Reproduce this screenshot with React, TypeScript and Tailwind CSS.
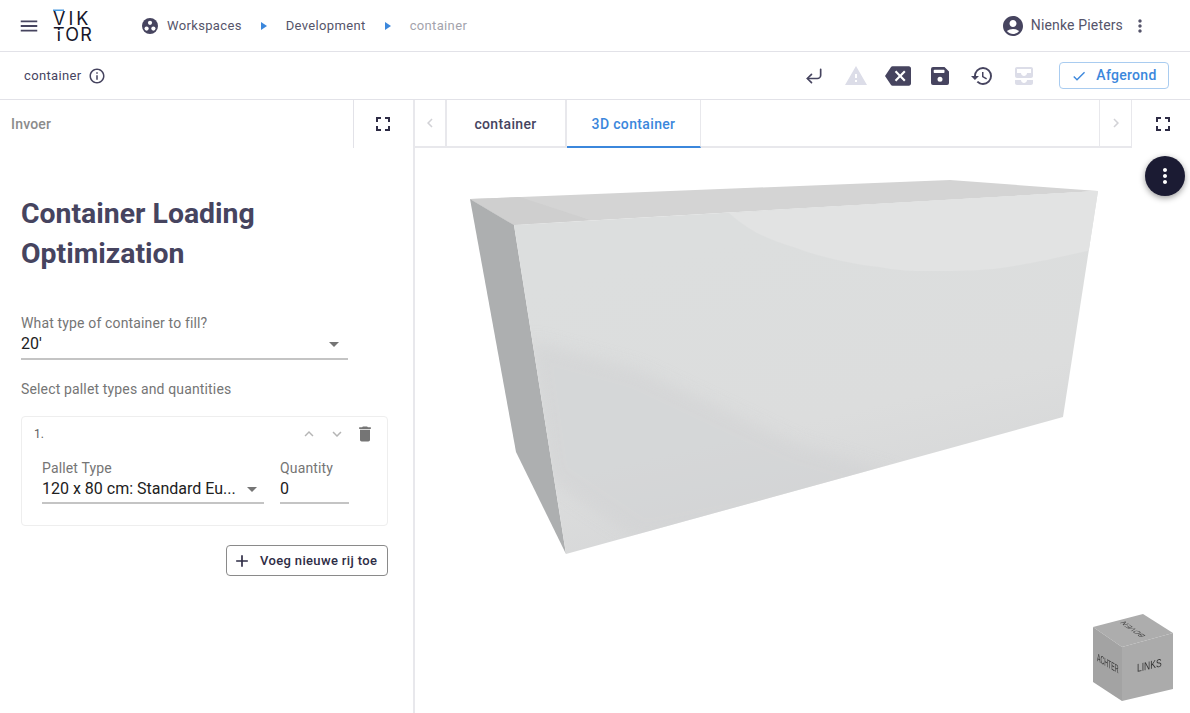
import { CornerDownLeft } from "lucide-react";
import {
  MdAdd,
  MdAccountCircle,
  MdAllInbox,
  MdArrowDropDown,
  MdBackspace,
  MdCheck,
  MdChevronLeft,
  MdChevronRight,
  MdDelete,
  MdFullscreen,
  MdHistory,
  MdInfoOutline,
  MdKeyboardArrowDown,
  MdKeyboardArrowUp,
  MdMenu,
  MdMoreVert,
  MdWarning,
} from "react-icons/md";

const Crumb = () => <span className="mx-[19px] h-0 w-0 border-y-[4px] border-l-[6px] border-y-transparent border-l-[#3b87dc]" />;

const Logo = () => (
  <svg width="44" height="40" viewBox="0 -3 44 40" className="ml-[13px] font-['Inter',sans-serif]" fill="#16162a">
    <rect x="0" y="0.500" width="11" height="1.500" fill="#4a9ae0" />
    <text x="0" y="16" fontSize="18" letterSpacing="3">VIK</text>
    <text x="0" y="32" fontSize="18" letterSpacing="1.200">TOR</text>
    <rect x="0" y="21" width="12" height="1.200" fill="#fff" />
  </svg>
);

const WorkspacesIcon = () => (
  <svg width="16" height="16" viewBox="0 0 16 16" className="ml-[45px] mr-[9px]">
    <circle cx="8" cy="8" r="8" fill="#46445f" />
    <circle cx="8" cy="4.800" r="2.100" fill="#fff" />
    <circle cx="4.600" cy="10.600" r="2.100" fill="#fff" />
    <circle cx="11.400" cy="10.600" r="2.100" fill="#fff" />
  </svg>
);

const SaveIcon = () => (
  <svg width="18" height="18" viewBox="0 0 18 18" fill="#46445f">
    <path
      fillRule="evenodd"
      d="M2 0h11.5L18 4.5V16a2 2 0 0 1-2 2H2a2 2 0 0 1-2-2V2a2 2 0 0 1 2-2zM3.5 2.7a.8.8 0 0 0-.8.8v1.7a.8.8 0 0 0 .8.8h9.2a.8.8 0 0 0 .8-.8V3.500a.8.8 0 0 0-.8-.8zM9 9.800a2.500 2.500 0 1 0 0 5 2.500 2.500 0 0 0 0-5z"
    />
  </svg>
);

const ToolIcon = ({ children }: { children: React.ReactNode }) => (
  <div className="flex w-[42px] items-center justify-center">{children}</div>
);

const Header = () => (
  <header className="flex h-[52px] shrink-0 items-center border-b border-[#e2e2e8] pl-[18px] pr-[40px] font-['Roboto',sans-serif] text-[13px] tracking-[0.35px] text-[#55546a]">
    <MdMenu size={22} className="text-[#46445f]" />
    <Logo />
    <WorkspacesIcon />
    <span>Workspaces</span>
    <Crumb />
    <span>Development</span>
    <Crumb />
    <span className="text-[#a3a3ac]">container</span>
    <MdAccountCircle size={24} className="ml-auto mr-[6px] text-[#46445f]" />
    <span className="text-[14px] tracking-[0.15px]">Nienke Pieters</span>
    <MdMoreVert size={20} className="ml-[7px] text-[#55546a]" />
  </header>
);

const Toolbar = () => (
  <div className="flex h-[48px] shrink-0 items-center border-b border-[#e2e2e8] pl-[24px] pr-[21px] font-['Roboto',sans-serif] text-[14px] text-[#46445f]">
    <span className="text-[13px] tracking-[0.35px]">container</span>
    <MdInfoOutline size={18} className="ml-[6px]" />
    <div className="ml-auto flex items-center">
      <ToolIcon>
        <CornerDownLeft size={20} strokeWidth={2} />
      </ToolIcon>
      <ToolIcon>
        <MdWarning size={24} className="text-[#dcdde8]" />
      </ToolIcon>
      <ToolIcon>
        <MdBackspace size={26} />
      </ToolIcon>
      <ToolIcon>
        <SaveIcon />
      </ToolIcon>
      <ToolIcon>
        <MdHistory size={24} />
      </ToolIcon>
      <ToolIcon>
        <MdAllInbox size={24} className="text-[#dcdde8]" />
      </ToolIcon>
    </div>
    <button className="ml-[14px] flex h-[27px] w-[110px] items-center justify-center gap-[9px] rounded-[4px] border border-[#a9ccf0] font-medium tracking-[0.3px] text-[#3b87dc]">
      <MdCheck size={16} />
      Afgerond
    </button>
  </div>
);

const Underline = ({ className, children }: { className: string; children: React.ReactNode }) => (
  <div className={`flex items-center border-b-2 border-[#c4c4c4] text-[16px] text-[#212121] ${className}`}>{children}</div>
);

const LeftPanel = () => (
  <aside className="flex w-[415px] shrink-0 flex-col border-r-2 border-[#e8e8ec] font-['Roboto',sans-serif]">
    <div className="flex h-[48px] shrink-0 items-center">
      <div className="flex h-full w-[354px] items-center border-r border-[#e2e2e8] pl-[11px] text-[14px] font-medium tracking-[0.2px] text-[#8b8b8b]">
        Invoer
      </div>
      <div className="flex flex-1 items-center justify-center pr-[2px]">
        <MdFullscreen size={24} className="text-[#2e2c45]" />
      </div>
    </div>
    <div className="px-[21px] pt-[46px]">
      <h1 className="text-[28.4px] font-bold leading-[40px] text-[#46445f]">
        Container Loading
        <br />
        Optimization
      </h1>
      <div className="mt-[39px] w-[327px]">
        <div className="text-[14px] leading-[20px] tracking-[0.15px] text-[#757575]">What type of container to fill?</div>
        <Underline className="h-[27px] justify-between pb-[3px] pr-[2px]">
          <span>20'</span>
          <MdArrowDropDown size={24} className="text-[#757575]" />
        </Underline>
      </div>
      <div className="mt-[19px] text-[14px] leading-[20px] tracking-[0.15px] text-[#757575]">Select pallet types and quantities</div>
      <div className="mt-[17px] h-[110px] w-[367px] rounded-[4px] border border-[#eeeeee] pl-[12px] pr-[12px]">
        <div className="flex h-[34px] items-center text-[12px] text-[#616161]">
          <span>1.</span>
          <MdKeyboardArrowUp size={18} className="ml-auto text-[#b5b5b5]" />
          <MdKeyboardArrowDown size={18} className="ml-[10px] text-[#b5b5b5]" />
          <MdDelete size={20} className="ml-[9px] text-[#757575]" />
        </div>
        <div className="ml-[8px] mt-[7px] flex gap-[16px]">
          <div className="w-[222px]">
            <div className="text-[14px] leading-[20px] tracking-[0.15px] text-[#757575]">Pallet Type</div>
            <Underline className="h-[26px] pb-[2px]">
              <span className="flex-1 truncate">120 x 80 cm: Standard Eu...</span>
              <MdArrowDropDown size={24} className="text-[#757575]" />
            </Underline>
          </div>
          <div className="w-[69px]">
            <div className="text-[14px] leading-[20px] tracking-[0.15px] text-[#757575]">Quantity</div>
            <Underline className="h-[26px] pb-[2px]">0</Underline>
          </div>
        </div>
      </div>
      <div className="mt-[19px] flex w-[367px] justify-end">
        <button className="flex h-[31px] w-[162px] items-center whitespace-nowrap rounded-[4px] border border-[#8a8a8a] pl-[5px] text-[13px] font-medium tracking-[0.35px] text-[#2e2c45]">
          <MdAdd size={20} className="mr-[8px] shrink-0" />
          Voeg nieuwe rij toe
        </button>
      </div>
    </div>
  </aside>
);

const Tabs = () => (
  <div className="flex h-[48px] shrink-0 font-['Roboto',sans-serif] text-[14px] font-medium tracking-[0.35px]">
    <div className="flex min-w-0 flex-1 border-b-2 border-[#e8e8ec]">
      <div className="flex w-[32px] items-center justify-center border-r-2 border-[#e8e8ec]">
        <MdChevronLeft size={18} className="text-[#d2d2d6]" />
      </div>
      <div className="flex w-[120px] items-center justify-center border-r-2 border-[#e8e8ec] pr-[1px] pt-[2px] text-[#46445f]">container</div>
      <div className="-mb-[2px] flex w-[134px] items-center justify-center border-b-2 border-r border-r-[#e8e8ec] border-b-[#3b87dc] pt-[2px] text-[#3b87dc]">
        3D container
      </div>
      <div className="flex-1 border-r border-[#e8e8ec]" />
      <div className="flex w-[32px] items-center justify-center border-r border-[#e8e8ec]">
        <MdChevronRight size={18} className="text-[#d2d2d6]" />
      </div>
    </div>
    <div className="flex w-[58px] items-center justify-center pl-[3px]">
      <MdFullscreen size={24} className="text-[#2e2c45]" />
    </div>
  </div>
);

const Model = () => (
  <svg className="absolute left-0 top-0" width="775" height="565" viewBox="415 148 775 565">
    <defs>
      <linearGradient id="front" x1="0.2" y1="0.2" x2="0.5" y2="1">
        <stop offset="0" stopColor="#dcdede" />
        <stop offset="0.6" stopColor="#dcdddd" />
        <stop offset="1" stopColor="#d5d6d7" />
      </linearGradient>
      <filter id="soft">
        <feGaussianBlur stdDeviation="8" />
      </filter>
      <filter id="softer">
        <feGaussianBlur stdDeviation="0.6" />
      </filter>
      <clipPath id="frontClip">
        <path d="M514 225 1098 191 1063 417 566 554 Z" />
      </clipPath>
    </defs>
    <path d="M470 199 950 180 1098 191 514 225 Z" fill="#d4d4d4" />
    <path d="M470 199 514 225 590 220 520 197 Z" fill="#cfcfcf" />
    <path d="M470 199 514 225 566 554 516 452 Z" fill="#adafb0" />
    <path d="M514 225 1098 191 1063 417 566 554 Z" fill="url(#front)" />
    <g clipPath="url(#frontClip)">
      <path d="M530 340 640 370 800 445 900 475 800 510 640 540 550 480 Z" fill="#d0d1d3" opacity="0.55" filter="url(#soft)" />
      <path
        d="M729 213 C750 232 770 240 793 247 C820 257 850 264 879 267 C905 272 925 271 943 271 C965 271 990 270 1008 267 C1040 262 1065 256 1100 248 L1100 190 Z"
        fill="#e2e3e3"
        filter="url(#softer)"
      />
    </g>
  </svg>
);

const NavCube = () => (
  <svg className="absolute left-[677px] top-[465px] font-['Liberation_Sans',sans-serif]" width="84" height="90" viewBox="1092 613 84 90">
    <defs>
      <filter id="cubeText">
        <feGaussianBlur stdDeviation="0.35" />
      </filter>
    </defs>
    <path d="M1093 627 1143 614 1173 633 1122 647 Z" fill="#adadad" />
    <path d="M1093 627 1122 647 1122 701 1093 682 Z" fill="#a3a3a3" />
    <path d="M1122 647 1173 633 1173 689 1122 701 Z" fill="#ababab" />
    <g filter="url(#cubeText)">
      <text transform="matrix(0.9 -0.2 0 1.2 1137 672)" fontSize="9.5" fill="#333">LINKS</text>
      <text transform="matrix(0.55 0.32 0 1.2 1097 661)" fontSize="9.5" fill="#333">ACHTER</text>
      <text transform="matrix(-0.6 -0.42 0.8 -0.2 1146 636)" fontSize="10" fill="#444">BOVEN</text>
    </g>
  </svg>
);

const Viewer = () => (
  <section className="flex min-w-0 flex-1 flex-col">
    <Tabs />
    <div className="relative flex-1 overflow-hidden">
      <Model />
      <NavCube />
      <button className="absolute right-[5px] top-[8px] flex h-[40px] w-[40px] items-center justify-center rounded-full bg-[#1b1b33] text-white shadow-[0_2px_6px_rgba(0,0,0,0.4)]">
        <MdMoreVert size={24} />
      </button>
    </div>
  </section>
);

export default function App() {
  return (
    <div className="flex h-[713px] w-[1190px] flex-col overflow-hidden bg-white">
      <Header />
      <Toolbar />
      <main className="flex min-h-0 flex-1">
        <LeftPanel />
        <Viewer />
      </main>
    </div>
  );
}
